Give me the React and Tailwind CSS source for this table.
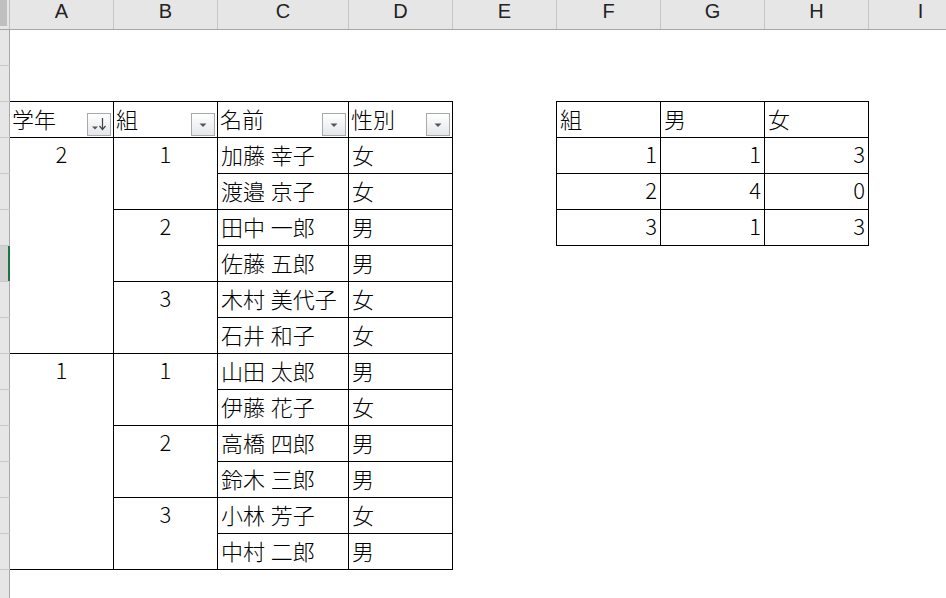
import React from "react";

const cols = [
  { l: "A", w: "w-[104px]" },
  { l: "B", w: "w-[104px]" },
  { l: "C", w: "w-[131px]" },
  { l: "D", w: "w-[104px]" },
  { l: "E", w: "w-[104px]" },
  { l: "F", w: "w-[104px]" },
  { l: "G", w: "w-[104px]" },
  { l: "H", w: "w-[104px]" },
  { l: "I", w: "w-[104px]" },
];

const groups = [
  {
    grade: "2",
    classes: [
      { c: "1", rows: [["加藤 幸子", "女"], ["渡邉 京子", "女"]] },
      { c: "2", rows: [["田中 一郎", "男"], ["佐藤 五郎", "男"]] },
      { c: "3", rows: [["木村 美代子", "女"], ["石井 和子", "女"]] },
    ],
  },
  {
    grade: "1",
    classes: [
      { c: "1", rows: [["山田 太郎", "男"], ["伊藤 花子", "女"]] },
      { c: "2", rows: [["高橋 四郎", "男"], ["鈴木 三郎", "男"]] },
      { c: "3", rows: [["小林 芳子", "女"], ["中村 二郎", "男"]] },
    ],
  },
];

const summary = [
  ["1", "1", "3"],
  ["2", "4", "0"],
  ["3", "1", "3"],
];

function FilterButton({ sorted }) {
  return (
    <div className="w-[24px] h-[23px] shrink-0 self-end mb-px mr-[2px] border border-[#a9a9a9] bg-linear-to-b from-white to-[#e4e7eb] flex items-center justify-center">
      {sorted ? (
        <svg width="22" height="21" viewBox="0 0 22 21">
          <path d="M4 12.5 L10 12.5 L7 15.5 Z" fill="#555" />
          <path d="M14.5 4 L14.5 15" stroke="#444" strokeWidth="1.2" />
          <path d="M11.5 12 L14.5 15.5 L17.5 12" stroke="#444" strokeWidth="1.2" fill="none" />
        </svg>
      ) : (
        <svg width="22" height="21" viewBox="0 0 22 21">
          <path d="M7.5 9.5 L14.5 9.5 L11 13 Z" fill="#555" />
        </svg>
      )}
    </div>
  );
}

function HeadCell({ children, sorted }) {
  return (
    <div className="bg-white flex items-center justify-between pl-[2px]">
      <span className="text-[22px] leading-none pb-[4px]">{children}</span>
      <FilterButton sorted={sorted} />
    </div>
  );
}

export default function App() {
  const strip = Array.from({ length: 16 }, (_, i) => i);
  return (
    <div className="w-[946px] h-[598px] overflow-hidden bg-white text-black font-light font-['Noto_Sans_CJK_JP','Noto_Sans',sans-serif]">
      {/* column headers */}
      <div className="flex h-[30px] bg-[#e6e6e6] border-b border-[#a6a6a6]">
        <div className="w-[10px] shrink-0 border-r border-[#c2c2c2]">
          <div className="w-[7px] h-[26px] bg-[#bfbfbf]" />
        </div>
        {cols.map((c) => (
          <div
            key={c.l}
            className={`${c.w} shrink-0 border-r border-[#c6c6c6] flex items-start justify-center font-['Liberation_Sans',sans-serif] text-[20px] leading-[23px] font-normal text-[#222]`}
          >
            {c.l}
          </div>
        ))}
      </div>

      <div className="flex">
        {/* row header strip */}
        <div className="w-[10px] shrink-0 flex flex-col gap-px bg-[#c8c8c8]">
          {strip.map((i) => (
            <div
              key={i}
              className={
                i === 6
                  ? "h-[35px] shrink-0 bg-[#d2d2d2] border-r-2 border-[#217346]"
                  : "h-[35px] shrink-0 bg-[#e6e6e6] border-r border-[#a8a8a8]"
              }
            />
          ))}
        </div>

        {/* sheet area */}
        <div className="flex items-start pt-[71px]">
          {/* main table */}
          <div className="grid grid-cols-[103px_103px_130px_103px] auto-rows-[35px] gap-px bg-black pt-px pr-px pb-px">
            <HeadCell sorted>学年</HeadCell>
            <HeadCell>組</HeadCell>
            <HeadCell>名前</HeadCell>
            <HeadCell>性別</HeadCell>
            {groups.map((g) =>
              g.classes.map((cl, ci) =>
                cl.rows.map((r, ri) => (
                  <React.Fragment key={g.grade + cl.c + ri}>
                    {ci === 0 && ri === 0 && (
                      <div className="row-span-6 bg-white">
                        <div className="h-[35px] flex items-center justify-center text-[22px] leading-none pb-[5px]">
                          {g.grade}
                        </div>
                      </div>
                    )}
                    {ri === 0 && (
                      <div className="row-span-2 bg-white">
                        <div className="h-[35px] flex items-center justify-center text-[22px] leading-none pb-[5px]">
                          {cl.c}
                        </div>
                      </div>
                    )}
                    <div className="bg-white flex items-center pl-[3px] pb-[4px] text-[22px] leading-none whitespace-pre [word-spacing:1px]">
                      {r[0]}
                    </div>
                    <div className="bg-white flex items-center pl-[3px] pb-[4px] text-[22px] leading-none">
                      {r[1]}
                    </div>
                  </React.Fragment>
                ))
              )
            )}
          </div>

          {/* summary table */}
          <div className="ml-[103px] grid grid-cols-[103px_103px_103px] auto-rows-[35px] gap-px bg-black p-px">
            {["組", "男", "女"].map((h) => (
              <div key={h} className="bg-white flex items-center pl-[3px] pb-[4px] text-[22px] leading-none">
                {h}
              </div>
            ))}
            {summary.map((row, i) =>
              row.map((v, j) => (
                <div
                  key={i + "-" + j}
                  className="bg-white flex items-center justify-end pr-[3px] pb-[5px] text-[22px] leading-none"
                >
                  {v}
                </div>
              ))
            )}
          </div>
        </div>
      </div>
    </div>
  );
}
